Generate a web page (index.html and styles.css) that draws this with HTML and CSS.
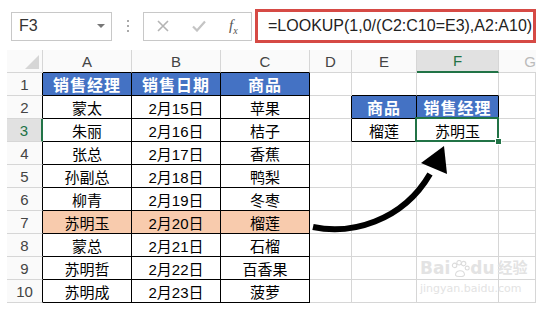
FILE: index.html
```html
<!DOCTYPE html>
<html lang="zh-CN">
<head>
    <meta charset="UTF-8">
    <meta name="viewport" content="width=device-width, initial-scale=1.0">
    <title>LOOKUP 反向查找</title>
    <link rel="stylesheet" href="styles.css">
</head>
<body>

    <div class="formula-bar">
        <div class="name-box"><span>F3</span><span class="caret"></span></div>
        <div class="grip"><i></i><i></i><i></i></div>
        <div class="fx-box">
            <svg class="icon-x" width="12" height="12" viewBox="0 0 12 12"><path d="M1 1L11 11M11 1L1 11" stroke="#b4b4b4" stroke-width="1.6" fill="none"/></svg>
            <svg class="icon-ok" width="14" height="12" viewBox="0 0 14 12"><path d="M1 6.5L5 10.5L13 1.5" stroke="#c4c4c4" stroke-width="2.2" fill="none"/></svg>
            <span class="fx">f<sub>x</sub></span>
        </div>
        <div class="formula">=LOOKUP(1,0/(C2:C10=E3),A2:A10)</div>
    </div>

    <div class="sheet-wrap">
        <div class="sheet">
            <div class="c hd corner"><svg width="14" height="14" viewBox="0 0 14 14"><polygon points="14,0 14,14 0,14" fill="#d6d6d6"/></svg></div>
            <div class="c hd top-edge">A</div>
            <div class="c hd top-edge">B</div>
            <div class="c hd top-edge">C</div>
            <div class="c hd">D</div>
            <div class="c hd">E</div>
            <div class="c hd sel-col">F</div>
            <div class="c hd clip">G</div>

            <div class="c hd left-edge">1</div>
            <div class="c td th">销售经理</div>
            <div class="c td th">销售日期</div>
            <div class="c td th">商品</div>
            <div class="c"></div>
            <div class="c top-edge"></div>
            <div class="c top-edge"></div>
            <div class="c"></div>

            <div class="c hd left-edge">2</div>
            <div class="c td">蒙太</div>
            <div class="c td">2月15日</div>
            <div class="c td">苹果</div>
            <div class="c left-edge"></div>
            <div class="c td th">商品</div>
            <div class="c td th">销售经理</div>
            <div class="c"></div>

            <div class="c hd sel-row">3</div>
            <div class="c td">朱丽</div>
            <div class="c td">2月16日</div>
            <div class="c td">桔子</div>
            <div class="c left-edge"></div>
            <div class="c td">榴莲</div>
            <div class="c td active">苏明玉</div>
            <div class="c"></div>

            <div class="c hd left-edge">4</div>
            <div class="c td">张总</div>
            <div class="c td">2月17日</div>
            <div class="c td">香蕉</div>
            <div class="c"></div>
            <div class="c"></div>
            <div class="c"></div>
            <div class="c"></div>

            <div class="c hd left-edge">5</div>
            <div class="c td">孙副总</div>
            <div class="c td">2月18日</div>
            <div class="c td">鸭梨</div>
            <div class="c"></div>
            <div class="c"></div>
            <div class="c"></div>
            <div class="c"></div>

            <div class="c hd left-edge">6</div>
            <div class="c td">柳青</div>
            <div class="c td">2月19日</div>
            <div class="c td">冬枣</div>
            <div class="c"></div>
            <div class="c"></div>
            <div class="c"></div>
            <div class="c"></div>

            <div class="c hd left-edge">7</div>
            <div class="c td hl">苏明玉</div>
            <div class="c td hl">2月20日</div>
            <div class="c td hl">榴莲</div>
            <div class="c"></div>
            <div class="c"></div>
            <div class="c"></div>
            <div class="c"></div>

            <div class="c hd left-edge">8</div>
            <div class="c td">蒙总</div>
            <div class="c td">2月21日</div>
            <div class="c td">石榴</div>
            <div class="c"></div>
            <div class="c"></div>
            <div class="c"></div>
            <div class="c"></div>

            <div class="c hd left-edge">9</div>
            <div class="c td">苏明哲</div>
            <div class="c td">2月22日</div>
            <div class="c td">百香果</div>
            <div class="c"></div>
            <div class="c"></div>
            <div class="c"></div>
            <div class="c"></div>

            <div class="c hd left-edge">10</div>
            <div class="c td">苏明成</div>
            <div class="c td">2月23日</div>
            <div class="c td">菠萝</div>
            <div class="c"></div>
            <div class="c"></div>
            <div class="c"></div>
            <div class="c"></div>
        </div>

        <!-- 箭头：从 C7 指向 F3 -->
        <svg class="arrow" width="548" height="266" viewBox="0 50 548 266">
            <path d="M313 227 C350 235 402 222 430 174" stroke="#000" stroke-width="6" fill="none"/>
            <polygon points="444,146 421,163 447,174" fill="#000"/>
        </svg>

        <div class="watermark">
            <div class="wm-logo">Bai<svg width="20" height="18" viewBox="0 0 22 20"><g fill="none" stroke="#dcdcdc" stroke-width="1.2"><circle cx="5" cy="6" r="2.5"/><circle cx="10" cy="3" r="2.5"/><circle cx="15" cy="4" r="2.5"/><circle cx="19" cy="9" r="2.2"/><path d="M6 17 C6 11 15 10 16 16 C16 19 7 19 6 17Z"/></g></svg>du<span class="wm-cn">经验</span></div>
            <div class="wm-url">jingyan.baidu.com</div>
        </div>
    </div>

</body>
</html>
```

FILE: styles.css
```css
body {
    margin: 0;
    background-color: #fff;
    font-family: "Liberation Sans", "Noto Sans CJK SC", sans-serif;
    color: #000;
    width: 548px;
    height: 316px;
    overflow: hidden;
}

/* 编辑栏 */

.formula-bar {
    display: flex;
    align-items: center;
    height: 50px;
    padding: 2px 0 0 11px;
    box-sizing: border-box;
}

.name-box {
    display: flex;
    align-items: center;
    justify-content: space-between;
    width: 101px;
    height: 29px;
    box-sizing: border-box;
    border: 1px solid #c8c8c8;
    padding: 0 6px 0 7px;
    font-size: 16px;
    color: #333;
}

.caret {
    width: 0;
    height: 0;
    border-left: 4px solid transparent;
    border-right: 4px solid transparent;
    border-top: 4px solid #777;
}

.grip {
    width: 31px;
    display: flex;
    flex-direction: column;
    align-items: center;
    gap: 3px;
}

.grip i {
    width: 2px;
    height: 2px;
    background-color: #aaa;
}

.fx-box {
    width: 109px;
    height: 29px;
    box-sizing: border-box;
    border: 1px solid #c8c8c8;
    display: flex;
    align-items: center;
}

.icon-x {
    margin-left: 13px;
}

.icon-ok {
    margin-left: 23px;
}

.fx {
    margin-left: 23px;
    font-family: "Liberation Serif", serif;
    font-style: italic;
    font-size: 15px;
    color: #555;
}

.fx sub {
    font-size: 10px;
}

.formula {
    width: 281px;
    height: 34px;
    margin-left: 3px;
    box-sizing: border-box;
    border: 3px solid #d64a45;
    padding-left: 10px;
    font-size: 16px;
    line-height: 28px;
    color: #222;
    white-space: nowrap;
}

/* 工作表 */

.sheet-wrap {
    position: relative;
}

.sheet {
    display: grid;
    grid-template-columns: 36px 89px 89px 89px 42px 65px 82px 37px;
    grid-auto-rows: 23px;
    margin-left: 7px;
    width: 529px;
}

.c {
    box-sizing: border-box;
    border-right: 1px solid #d6d6d6;
    border-bottom: 1px solid #d6d6d6;
    display: flex;
    align-items: center;
    justify-content: center;
    font-size: 15px;
    white-space: nowrap;
}

.hd {
    background-color: #fafafa;
    color: #444;
    font-size: 15px;
}

.corner {
    justify-content: flex-end;
    align-items: flex-end;
    padding: 0 3px 3px 0;
}

.clip {
    overflow: hidden;
    justify-content: flex-end;
    color: #bbb;
    border-right: none;
}

.top-edge {
    border-bottom-color: #000;
}

.left-edge {
    border-right-color: #000;
}

.sel-col {
    background-color: #e1e1e1;
    color: #217346;
    border-bottom: 2px solid #217346;
}

.sel-row {
    background-color: #e1e1e1;
    color: #217346;
    border-right: 2px solid #217346;
}

.td {
    border-right-color: #000;
    border-bottom-color: #000;
}

.th {
    background-color: #4472c4;
    color: #fff;
    font-weight: bold;
    font-size: 16px;
    letter-spacing: 1px;
}

.hl {
    background-color: #f8cbad;
}

.active {
    position: relative;
}

.active::after {
    content: "";
    position: absolute;
    top: -2px;
    left: -2px;
    right: -1px;
    bottom: -1px;
    border: 2px solid #217346;
}

.active::before {
    content: "";
    position: absolute;
    right: -4px;
    bottom: -4px;
    width: 5px;
    height: 5px;
    background-color: #217346;
    border: 1px solid #fff;
    z-index: 1;
}

.arrow {
    position: absolute;
    top: 0;
    left: 0;
    pointer-events: none;
}

/* 水印 */

.watermark {
    position: absolute;
    left: 420px;
    top: 208px;
    color: #e3e3e3;
    font-family: "DejaVu Sans", "Noto Sans CJK SC", sans-serif;
    white-space: nowrap;
}

.wm-logo {
    display: flex;
    align-items: flex-end;
    font-size: 17px;
    font-weight: bold;
    line-height: 20px;
}

.wm-cn {
    margin-left: 3px;
    font-size: 15px;
}

.wm-url {
    font-size: 11px;
    line-height: 13px;
    margin-top: 4px;
}
```
